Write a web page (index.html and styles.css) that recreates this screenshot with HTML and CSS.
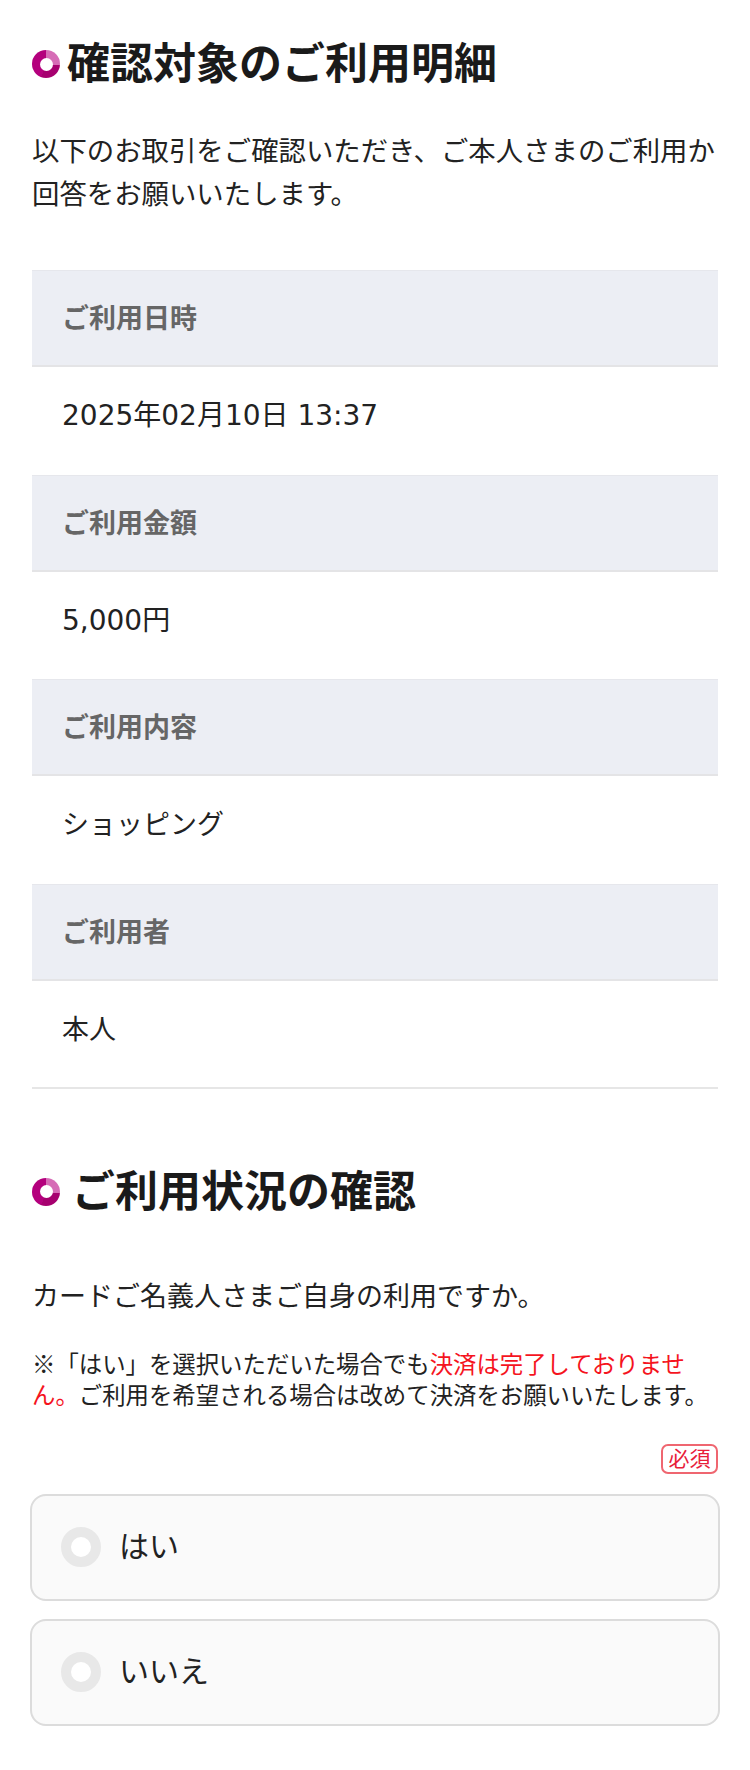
FILE: index.html
```html
<!DOCTYPE html>
<html lang="ja">
<head>
<meta charset="utf-8">
<title>確認対象のご利用明細</title>
<link rel="stylesheet" href="styles.css">
</head>
<body>
<main class="page">
  <h2 class="sec-title"><span class="ring"></span><span class="sec-text">確認対象のご利用明細</span></h2>
  <p class="lead">以下のお取引をご確認いただき、ご本人さまのご利用か回答をお願いいたします。</p>

  <dl class="detail">
    <dt class="detail-label">ご利用日時</dt>
    <dd class="detail-value num">2025年02月10日 13:37</dd>
    <dt class="detail-label">ご利用金額</dt>
    <dd class="detail-value num">5,000円</dd>
    <dt class="detail-label">ご利用内容</dt>
    <dd class="detail-value">ショッピング</dd>
    <dt class="detail-label">ご利用者</dt>
    <dd class="detail-value">本人</dd>
  </dl>

  <h2 class="sec-title sec-title-2"><span class="ring"></span><span class="sec-text">ご利用状況の確認</span></h2>
  <p class="question">カードご名義人さまご自身の利用ですか。</p>
  <p class="note">※「はい」を選択いただいた場合でも<span class="warn">決済は完了しておりませ</span><span class="warn">ん。</span>ご利用を希望される場合は改めて決済をお願いいたします。</p>

  <div class="req-row"><span class="badge">必須</span></div>

  <div class="options">
    <label class="option"><span class="radio"></span><span class="option-text">はい</span></label>
    <label class="option"><span class="radio"></span><span class="option-text">いいえ</span></label>
  </div>
</main>
</body>
</html>
```
FILE: styles.css
```css
* { box-sizing: border-box; }
html, body { margin: 0; padding: 0; background: #fff; }
body {
  font-family: Roboto, "Noto Sans CJK JP", sans-serif;
  color: #222;
  width: 750px;
}
.page {
  padding: 36px 32px 40px;
}
.sec-title {
  display: flex;
  align-items: center;
  margin: 0;
  font-size: 43px;
  line-height: 56px;
  font-weight: 700;
  color: #1a1a1a;
}
.ring {
  position: relative;
  flex: 0 0 28px;
  width: 28px;
  height: 28px;
  border-radius: 50%;
  background: conic-gradient(#d66cb6 0deg 95deg, #a6006f 95deg 200deg, #b4007d 200deg 360deg);
  margin-right: 7px;
}
.ring::after {
  content: "";
  position: absolute;
  left: 7.5px;
  top: 7.5px;
  width: 13px;
  height: 13px;
  border-radius: 50%;
  background: #fff;
}
.sec-title-2 {
  margin-top: 75px;
}
.sec-title-2 .ring { margin-right: 12px; }
.lead {
  margin: 39px 0 0;
  font-size: 27.4px;
  line-height: 43px;
}
.detail {
  margin: 53px 0 0;
  padding: 0;
}
.detail-label {
  margin: 0;
  background: #eceef4;
  border-top: 1px solid #e6e7ec;
  border-bottom: 2px solid #e4e4e6;
  padding: 28px 30px 26px;
  font-size: 27px;
  line-height: 40px;
  font-weight: 700;
  color: #666;
}
.detail-value {
  margin: 0;
  padding: 29px 30px 38.6px;
  font-size: 27px;
  line-height: 40px;
  color: #222;
}
.detail-value.num {
  font-family: "DejaVu Sans", "Noto Sans CJK JP", sans-serif;
  font-size: 28px;
}
.detail-value:last-child {
  border-bottom: 2px solid #e6e6e6;
  padding-bottom: 37px;
}
.question {
  margin: 56px 0 0;
  font-size: 27px;
  line-height: 43px;
}
.note {
  margin: 31px 0 0;
  font-size: 23.4px;
  line-height: 31px;
}
.warn { color: #f5141e; }
.req-row {
  display: flex;
  justify-content: flex-end;
  margin-top: 32px;
}
.badge {
  display: inline-block;
  width: 57px;
  height: 30px;
  border: 2px solid #ef6670;
  border-radius: 7px;
  color: #e8203a;
  font-size: 21px;
  line-height: 26px;
  text-align: center;
}
.options {
  display: flex;
  flex-direction: column;
  gap: 18px;
  margin-top: 20px;
}
.option {
  display: flex;
  align-items: center;
  height: 107px;
  margin: 0 -2px;
  padding: 0 29px;
  border: 2px solid #dcdcdc;
  border-radius: 16px;
  background: #fafafa;
}
.radio {
  flex: 0 0 40px;
  width: 40px;
  height: 40px;
  border-radius: 50%;
  border: 10px solid #e8e8e8;
  background: #fff;
  margin-right: 18px;
}
.option-text {
  font-size: 30px;
  line-height: 40px;
  color: #222;
}
```
